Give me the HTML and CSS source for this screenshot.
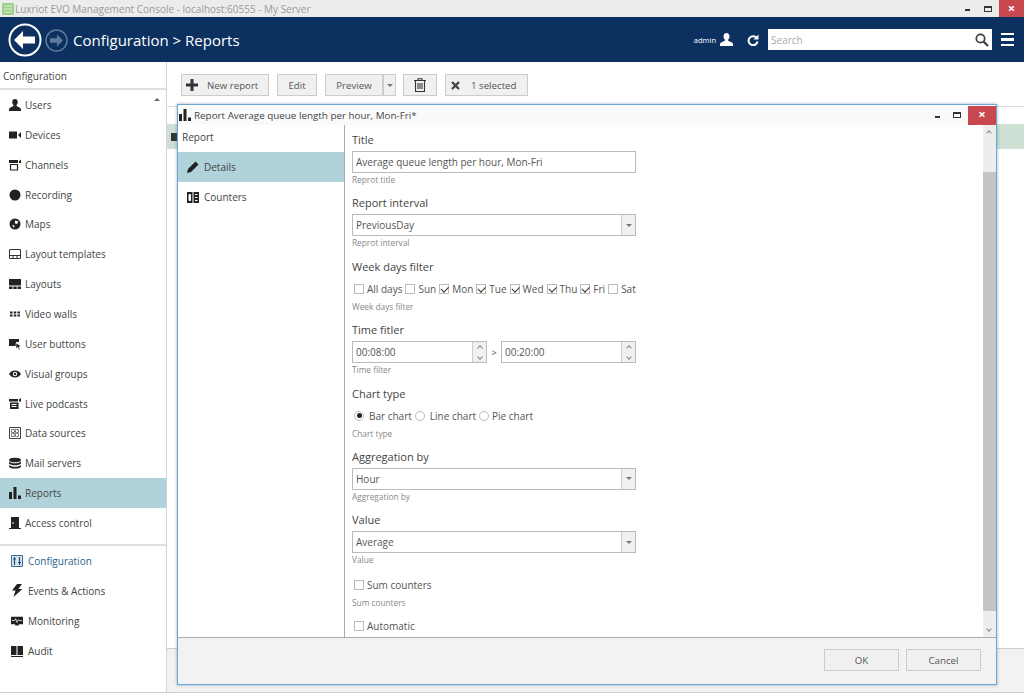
FILE: index.html
```html
<!DOCTYPE html>
<html lang="en">
<head>
    <meta charset="UTF-8">
    <title>Luxriot EVO Management Console</title>
    <link rel="stylesheet" href="styles.css">
</head>
<body>
    <!-- icons used more than once -->
    <svg class="defs" width="0" height="0">
        <symbol id="i-user" viewBox="0 0 14 14"><path d="M7 0c2 0 3.2 1.4 3.2 3.6 0 1.500-.6 2.800-1.400 3.500v1.200l4 1.800c.8.4 1.200 1 1.200 1.900V14H0v-2c0-.9.4-1.500 1.200-1.900l4-1.800V7.100C4.400 6.400 3.800 5.100 3.800 3.600 3.800 1.400 5 0 7 0z"/></symbol>
        <symbol id="i-bars" viewBox="0 0 12 12"><path d="M0 5h3v7H0zM4.500 0h3v12h-3zM9 8.500h3V12H9z"/></symbol>
    </svg>

    <!-- window title -->
    <div class="titlebar">
        <svg class="app-icon" width="12" height="12" viewBox="0 0 12 12"><rect width="12" height="12" fill="#9fd089"/><path d="M2 3h8M2 6h8M2 9h8" stroke="#dcefcf"/></svg>
        <span class="app-title">Luxriot EVO Management Console - localhost:60555 - My Server</span>
        <span class="win-min"></span>
        <span class="win-max"></span>
        <span class="win-close">×</span>
    </div>

    <!-- header -->
    <div class="header">
        <svg class="nav-back" width="34" height="34" viewBox="0 0 34 34"><circle cx="17" cy="17" r="15.500" fill="none" stroke="#fff" stroke-width="2"/><path d="M6 17l9-9v5.500h12v7H15V26z" fill="#fff"/></svg>
        <svg class="nav-next" width="23" height="23" viewBox="0 0 23 23"><circle cx="11.500" cy="11.500" r="10.500" fill="none" stroke="#5d7a9c" stroke-width="1.500"/><path d="M18 11.500l-6-6v3.700H5v4.600h7v3.700z" fill="#5d7a9c"/></svg>
        <div class="crumb">Configuration &gt; Reports</div>
        <div class="admin">admin</div>
        <svg class="admin-icon" width="13" height="13"><use href="#i-user"/></svg>
        <svg class="refresh" width="12" height="12" viewBox="0 0 12 12"><path d="M10 4.500A4.500 4.500 0 1 0 10.500 7.500" fill="none" stroke="#fff" stroke-width="2"/><path d="M11.500 0.500v5h-5z" fill="#fff"/></svg>
        <div class="search">
            <span>Search</span>
            <svg width="14" height="14" viewBox="0 0 14 14"><circle cx="5.500" cy="5.500" r="4.200" fill="none" stroke="#444" stroke-width="1.800"/><path d="M8.500 8.500l4.500 4.500" stroke="#444" stroke-width="2.400"/></svg>
        </div>
        <div class="burger"><i></i><i></i><i></i></div>
    </div>

    <div class="body">
        <!-- left menu -->
        <div class="sidebar">
            <div class="side-title">Configuration</div>
            <div class="side-list">
                <span class="side-caret"></span>
                <div class="side-item"><svg width="12" height="12"><use href="#i-user"/></svg>Users</div>
                <div class="side-item"><svg width="12" height="12" viewBox="0 0 12 12"><path d="M0 2.500h8v7H0zM9 6l3-3v6z"/></svg>Devices</div>
                <div class="side-item"><svg width="12" height="12" viewBox="0 0 12 12"><path d="M0 1h9v3H0zM10 2l2-1.500V4H10z"/><path d="M1.500 5.500h7v5.500h-7z" fill="none" stroke="#222" stroke-width="1.200"/></svg>Channels</div>
                <div class="side-item"><svg width="12" height="12" viewBox="0 0 12 12"><circle cx="6" cy="6" r="5.500"/></svg>Recording</div>
                <div class="side-item"><svg width="12" height="12" viewBox="0 0 12 12"><circle cx="6" cy="6" r="5.500"/><path d="M6 2.500l3.500 1L8 6 6 5.500zM3 7l2.500.5L5 10z" fill="#fff"/></svg>Maps</div>
                <div class="side-item"><svg width="12" height="12" viewBox="0 0 12 12"><path d="M.5 1.500h11v9H.5zM.5 7.500h11M4 7.500v3M8 7.500v3" fill="none" stroke="#333"/></svg>Layout templates</div>
                <div class="side-item"><svg width="12" height="12" viewBox="0 0 12 12"><path d="M0 1h12v6.500H0zM0 8.500h3.500V11H0zM4.300 8.500h3.400V11H4.300zM8.500 8.500H12V11H8.500z"/></svg>Layouts</div>
                <div class="side-item"><svg width="12" height="12" viewBox="0 0 12 12"><path d="M1 3.500h2.500v2H1zM4.700 3.500h2.600v2H4.700zM8.500 3.500H11v2H8.500zM1 6.500h2.500v2H1zM4.700 6.500h2.600v2H4.700zM8.500 6.500H11v2H8.500z"/></svg>Video walls</div>
                <div class="side-item"><svg width="12" height="12" viewBox="0 0 12 12"><path d="M0 1h10v3H7v4H0z"/><path d="M7 5l5 3-2 .8L11 11.500l-1 .5-1.200-2.700L7 10.500z" fill="#222" stroke="#fff" stroke-width=".5"/></svg>User buttons</div>
                <div class="side-item"><svg width="12" height="12" viewBox="0 0 12 12"><path d="M0 6c1.500-2.500 3.500-3.500 6-3.500S10.500 3.500 12 6c-1.500 2.500-3.500 3.500-6 3.500S1.500 8.500 0 6z"/><circle cx="6" cy="6" r="2.200" fill="#fff"/><circle cx="6" cy="6" r="1.200"/></svg>Visual groups</div>
                <div class="side-item"><svg width="12" height="12" viewBox="0 0 12 12"><path d="M0 1h9v2.500H0zM10 1.500l2-1.500v3.500h-2zM1 4.500h8.500V11H1z"/><path d="M2.500 6.500h5M2.500 8.500h5" stroke="#fff"/></svg>Live podcasts</div>
                <div class="side-item"><svg width="12" height="12" viewBox="0 0 12 12"><path d="M.5.500h11v11H.5z" fill="none" stroke="#444"/><path d="M2.500 2.500h3v3h-3zM6.500 2.500h3v3h-3zM2.500 6.500h3v3h-3zM6.500 6.500h3v3h-3z" fill="none" stroke="#444" stroke-dasharray="1 .6"/></svg>Data sources</div>
                <div class="side-item"><svg width="12" height="12" viewBox="0 0 12 12"><ellipse cx="6" cy="3" rx="6" ry="2.300"/><path d="M0 4.500c1 1.200 3 1.800 6 1.800s5-.6 6-1.800v2c-1 1.200-3 1.800-6 1.800S1 7.700 0 6.500zM0 8c1 1.200 3 1.800 6 1.800S11 9.200 12 8v1.700C11 11 9 11.500 6 11.500S1 11 0 9.700z"/></svg>Mail servers</div>
                <div class="side-item active"><svg width="12" height="12"><use href="#i-bars"/></svg>Reports</div>
                <div class="side-item"><svg width="12" height="12" viewBox="0 0 12 12"><path d="M2 0h8v11H2zM0 11h12v1H0z"/><circle cx="4" cy="6" r=".8" fill="#fff"/></svg>Access control</div>
            </div>
            <div class="side-modes">
                <div class="side-item mode current"><svg width="12" height="12" viewBox="0 0 12 12"><path d="M.5.500h11v11H.5z" fill="#d9e6f2" stroke="#3a6a94"/><path d="M3.500 2v8M8.500 2v8M2 4h3M7 7.500h3" fill="none" stroke="#1f4e79" stroke-width="1.200"/></svg>Configuration</div>
                <div class="side-item mode"><svg width="12" height="13" viewBox="0 0 12 13"><path d="M6 0L1 6.500h3.500L2.500 13 11.500 5H7.500L11 0z"/></svg>Events &amp; Actions</div>
                <div class="side-item mode"><svg width="12" height="12" viewBox="0 0 13 12"><path d="M0 1.500h13v8H8.500v1.500h-4V9.500H0z"/><path d="M1 5.500h3l1-2 1.500 4 1.500-3 1 1h3" fill="none" stroke="#fff" stroke-width=".8"/></svg>Monitoring</div>
                <div class="side-item mode"><svg width="12" height="12" viewBox="0 0 12 12"><path d="M0 1h5.500v9H0zM6.500 1H12v9H6.500zM0 11h12v1H0z"/></svg>Audit</div>
            </div>
        </div>

        <!-- main area behind the dialog -->
        <div class="main">
            <div class="toolbar">
                <button class="btn btn-new"><svg width="12" height="12" viewBox="0 0 12 12"><path d="M4.500 0h3v4.500H12v3H7.500V12h-3V7.500H0v-3h4.500z" fill="#333"/></svg>New report</button>
                <button class="btn btn-edit">Edit</button>
                <div class="split">
                    <button class="btn btn-preview">Preview</button>
                    <button class="btn btn-drop"><i class="tri"></i></button>
                </div>
                <button class="btn btn-trash"><svg width="12" height="14" viewBox="0 0 12 14"><path d="M0 2.500h12M4 2.500V.800h4v1.700M1.500 2.500v11h9v-11M4 5v6M6 5v6M8 5v6" fill="none" stroke="#333" stroke-width="1.100"/></svg></button>
                <button class="btn btn-selected"><svg width="9" height="9" viewBox="0 0 9 9"><path d="M1 1l7 7M8 1L1 8" stroke="#444" stroke-width="2.400"/></svg>1 selected</button>
            </div>
            <div class="table-head"></div>
            <div class="table-row"><i class="row-mark"></i></div>
            <div class="main-fill"></div>
            <div class="main-foot"></div>
        </div>
    </div>
    <div class="statusline"></div>

    <!-- report dialog -->
    <div class="dialog">
        <div class="dlg-title">
            <svg width="12" height="12"><use href="#i-bars"/></svg>
            <span class="dlg-name">Report Average queue length per hour, Mon-Fri*</span>
            <span class="win-min dlg-min"></span>
            <span class="win-max dlg-max"></span>
            <span class="win-close dlg-close">×</span>
        </div>
        <div class="dlg-body">
            <div class="dlg-nav">
                <div class="nav-head">Report</div>
                <div class="side-item dlg-item active"><svg width="12" height="12" viewBox="0 0 12 12"><path d="M8.500.500l3 3-7.500 7.500L0 12l1-4z"/></svg>Details</div>
                <div class="side-item dlg-item"><svg width="12" height="11" viewBox="0 0 12 11"><path d="M0 0h5.500v11H0zM6.500 0H12v11H6.500z"/><path d="M2 2.500h1.500v6H2zM8 2.500h2.500M8 5.500h2.500M8 8.500h2.500" stroke="#fff" fill="#fff"/></svg>Counters</div>
            </div>
            <div class="form">
                <div class="field">
                    <div class="label">Title</div>
                    <div class="box">Average queue length per hour, Mon-Fri</div>
                    <div class="hint">Reprot title</div>
                </div>
                <div class="field">
                    <div class="label">Report interval</div>
                    <div class="box select">PreviousDay<span class="select-arrow"><i class="tri"></i></span></div>
                    <div class="hint">Reprot interval</div>
                </div>
                <div class="field">
                    <div class="label">Week days filter</div>
                    <div class="choices">
                        <span class="check"></span><span class="opt">All days</span>
                        <span class="check"></span><span class="opt">Sun</span>
                        <span class="check on"></span><span class="opt">Mon</span>
                        <span class="check on"></span><span class="opt">Tue</span>
                        <span class="check on"></span><span class="opt">Wed</span>
                        <span class="check on"></span><span class="opt">Thu</span>
                        <span class="check on"></span><span class="opt">Fri</span>
                        <span class="check"></span><span class="opt">Sat</span>
                    </div>
                    <div class="hint">Week days filter</div>
                </div>
                <div class="field">
                    <div class="label">Time fitler</div>
                    <div class="time-row">
                        <div class="box time">00:08:00<span class="spin"><i class="up"></i><i class="down"></i></span></div>
                        <span class="gt">&gt;</span>
                        <div class="box time">00:20:00<span class="spin"><i class="up"></i><i class="down"></i></span></div>
                    </div>
                    <div class="hint">Time filter</div>
                </div>
                <div class="field">
                    <div class="label">Chart type</div>
                    <div class="choices">
                        <span class="radio on"></span><span class="opt">Bar chart</span>
                        <span class="radio"></span><span class="opt">Line chart</span>
                        <span class="radio pie"></span><span class="opt">Pie chart</span>
                    </div>
                    <div class="hint">Chart type</div>
                </div>
                <div class="field">
                    <div class="label">Aggregation by</div>
                    <div class="box select">Hour<span class="select-arrow"><i class="tri"></i></span></div>
                    <div class="hint">Aggregation by</div>
                </div>
                <div class="field">
                    <div class="label">Value</div>
                    <div class="box select">Average<span class="select-arrow"><i class="tri"></i></span></div>
                    <div class="hint">Value</div>
                </div>
                <div class="field-check">
                    <div class="choices"><span class="check"></span><span class="opt">Sum counters</span></div>
                    <div class="hint">Sum counters</div>
                </div>
                <div class="field-check">
                    <div class="choices"><span class="check"></span><span class="opt">Automatic</span></div>
                </div>
            </div>
            <div class="scrollbar">
                <span class="chev-up"></span>
                <span class="thumb"></span>
                <span class="chev-down"></span>
            </div>
        </div>
        <div class="dlg-foot">
            <button class="btn btn-dlg">OK</button>
            <button class="btn btn-dlg">Cancel</button>
        </div>
    </div>
</body>
</html>
```

FILE: styles.css
```css
* {
    box-sizing: border-box;
}
html, body {
    margin: 0;
    height: 694px;
    overflow: hidden;
}
body {
    position: relative;
    font-family: "Open Sans", "Noto Sans", sans-serif;
    font-size: 10px;
    color: #444;
    background-color: #fff;
}
.defs {
    position: absolute;
}
i {
    display: block;
}

/* window title */
.titlebar {
    height: 17px;
    display: flex;
    align-items: center;
    background-color: #ececec;
}
.app-icon {
    margin: 0 1px 0 2px;
}
.app-title {
    flex: 1;
    color: #9a9a9a;
    font-size: 10px;
}
.win-min {
    width: 5px;
    height: 2px;
    margin-right: 14px;
    margin-top: 3px;
    background-color: #333;
}
.win-max {
    width: 8px;
    height: 6px;
    margin-right: 7px;
    border: 1px solid #333;
    border-top-width: 2px;
}
.win-close {
    width: 25px;
    height: 17px;
    line-height: 16px;
    text-align: center;
    color: #fff;
    font-size: 13px;
    font-weight: bold;
    background-color: #c9474f;
}

/* header */
.header {
    height: 45px;
    display: flex;
    align-items: center;
    padding: 0 10px 0 8px;
    color: #fff;
    background-color: #0c3161;
}
.nav-next {
    margin-left: 3px;
    margin-top: 2px;
}
.crumb {
    flex: 1;
    margin-left: 5px;
    font-size: 15px;
}
.admin {
    font-size: 7.500px;
    margin-right: 4px;
}
.admin-icon {
    fill: #fff;
    margin-right: 14px;
}
.refresh {
    margin-right: 9px;
}
.search {
    width: 224px;
    height: 21px;
    display: flex;
    align-items: center;
    justify-content: space-between;
    padding: 0 3px;
    color: #aaa;
    background-color: #fff;
}
.burger {
    width: 13px;
    margin-left: 9px;
}
.burger i {
    height: 2.500px;
    margin: 3px 0;
    background-color: #fff;
}

/* left menu */
.body {
    height: 630px;
    display: flex;
}
.sidebar {
    width: 167px;
    border-right: 1px solid #d5d5d5;
}
.side-title {
    height: 28px;
    line-height: 28px;
    padding-left: 3px;
    border-bottom: 2px solid #dedede;
}
.side-list {
    position: relative;
    height: 456px;
    border-bottom: 2px solid #dedede;
}
.side-caret {
    position: absolute;
    top: 8px;
    right: 6px;
    border: 3px solid transparent;
    border-top-width: 0;
    border-bottom: 3px solid #666;
}
.side-item {
    height: 29.860px;
    display: flex;
    align-items: center;
    gap: 4px;
    padding-left: 9px;
    fill: #222;
    white-space: nowrap;
}
.side-item.active {
    background-color: #b0d2da;
}
.mode {
    padding-left: 11px;
    gap: 5px;
}
.current {
    color: #2d5f8a;
}

/* main area */
.main {
    flex: 1;
    display: flex;
    flex-direction: column;
}
.toolbar {
    height: 45px;
    display: flex;
    gap: 8px;
    padding: 12px 0 0 14px;
    border-bottom: 1px solid #ddd;
}
.btn {
    height: 22px;
    padding: 0;
    font-family: inherit;
    font-size: 9.700px;
    color: #555;
    border: 1px solid #ccc;
    background-color: #f0f0f0;
}
.btn-new {
    width: 88px;
    display: flex;
    align-items: center;
    gap: 9px;
    padding-left: 4px;
}
.btn-edit {
    width: 40px;
}
.split {
    display: flex;
}
.btn-preview {
    width: 58px;
}
.btn-drop {
    width: 13px;
    margin-right: -1px;
    display: flex;
    align-items: center;
    justify-content: center;
}
.tri {
    border: 3px solid transparent;
    border-bottom-width: 0;
    border-top: 3px solid #777;
}
.btn-trash {
    width: 34px;
    padding-top: 2px;
}
.btn-selected {
    width: 83px;
    display: flex;
    align-items: center;
    gap: 11px;
    padding-left: 5px;
}
.table-head {
    height: 17px;
}
.table-row {
    position: relative;
    height: 25px;
    background-color: #cde0d3;
}
.row-mark {
    position: absolute;
    left: 4px;
    top: 9px;
    width: 6px;
    height: 8px;
    background-color: #333;
}
.main-fill {
    flex: 1;
}
.main-foot {
    height: 44px;
    border-top: 1px solid #ccc;
    background-color: #f2f2f2;
}
.statusline {
    height: 1px;
    background-color: #cfcfcf;
}

/* report dialog */
.dialog {
    position: absolute;
    left: 177px;
    top: 104px;
    width: 820px;
    height: 581px;
    display: flex;
    flex-direction: column;
    background-color: #fff;
    border: 1px solid #6ea6d2;
    box-shadow: 0 0 3px rgba(60, 100, 140, 0.5);
}
.dlg-title {
    height: 20px;
    flex: none;
    display: flex;
    align-items: center;
    gap: 3px;
    padding-left: 1px;
    fill: #222;
    background-color: #fafafa;
}
.dlg-name {
    flex: 1;
    font-size: 9.850px;
}
.dlg-min {
    margin-right: 10px;
}
.dlg-max {
    margin-right: 4px;
}
.dlg-close {
    width: 28px;
    height: 19px;
}
.dlg-body {
    flex: 1;
    min-height: 0;
    display: flex;
}
.dlg-nav {
    width: 167px;
    border-right: 1px solid #aaa;
}
.nav-head {
    height: 27px;
    line-height: 25px;
    padding-left: 4px;
}
.dlg-item {
    height: 30px;
    padding-left: 9px;
    gap: 5px;
}
.form {
    flex: 1;
    overflow: hidden;
    padding: 5px 0 0 7px;
}
.field {
    height: 63.400px;
}
.label {
    height: 21px;
    line-height: 20px;
    font-size: 11px;
}
.box {
    width: 284px;
    height: 22px;
    line-height: 20px;
    padding-left: 3px;
    border: 1px solid #bbb;
    color: #555;
}
.select {
    position: relative;
}
.select-arrow {
    position: absolute;
    top: 0;
    right: 0;
    width: 14px;
    height: 20px;
    display: flex;
    align-items: center;
    justify-content: center;
    background-color: #f0f0f0;
    border-left: 1px solid #ccc;
}
.hint {
    height: 13px;
    line-height: 13px;
    font-size: 8.300px;
    color: #888;
}
.choices {
    height: 22px;
    display: flex;
    align-items: center;
    color: #555;
}
.opt {
    margin-right: 3px;
}
.check {
    width: 10px;
    height: 10px;
    margin: 0 3px 0 0;
    border: 1px solid #bbb;
    position: relative;
}
.choices .check:first-child {
    margin-left: 2px;
}
.check.on::after {
    content: "";
    position: absolute;
    left: 1px;
    top: 1px;
    width: 6px;
    height: 3.500px;
    border-left: 1.500px solid #333;
    border-bottom: 1.500px solid #333;
    transform: rotate(-45deg);
}
.radio {
    width: 10px;
    height: 10px;
    margin: 0 5px 0 0;
    border: 1px solid #bbb;
    border-radius: 50%;
    position: relative;
}
.radio.pie {
    margin-right: 3px;
}
.radio.on::after {
    content: "";
    position: absolute;
    left: 1.500px;
    top: 1.500px;
    width: 5px;
    height: 5px;
    border-radius: 50%;
    background-color: #222;
}
.choices .radio:first-child {
    margin-left: 2px;
}
.time-row {
    display: flex;
    align-items: center;
}
.time {
    position: relative;
    width: 135px;
}
.spin {
    position: absolute;
    top: 0;
    right: 0;
    width: 14px;
    height: 20px;
    display: flex;
    flex-direction: column;
    align-items: center;
    justify-content: center;
    gap: 5px;
    background-color: #f0f0f0;
    border-left: 1px solid #ccc;
}
.spin .up, .chev-up {
    width: 4px;
    height: 4px;
    border-left: 1px solid #888;
    border-top: 1px solid #888;
    transform: rotate(45deg);
}
.spin .down, .chev-down {
    width: 4px;
    height: 4px;
    border-right: 1px solid #888;
    border-bottom: 1px solid #888;
    transform: rotate(45deg);
}
.gt {
    width: 14px;
    text-align: center;
    font-size: 9px;
}
.field-check {
    height: 41px;
}
.scrollbar {
    position: relative;
    width: 13px;
    background-color: #ededed;
}
.thumb {
    position: absolute;
    top: 47px;
    left: 0;
    width: 13px;
    height: 439px;
    background-color: #c4c4c4;
}
.chev-up {
    position: absolute;
    top: 6px;
    left: 4px;
}
.chev-down {
    position: absolute;
    bottom: 6px;
    left: 4px;
}
.dlg-foot {
    height: 47px;
    flex: none;
    display: flex;
    justify-content: flex-end;
    gap: 7px;
    padding: 11px 15px 0 0;
    border-top: 1px solid #aaa;
    background-color: #f2f2f2;
}
.btn-dlg {
    width: 75px;
}
```
